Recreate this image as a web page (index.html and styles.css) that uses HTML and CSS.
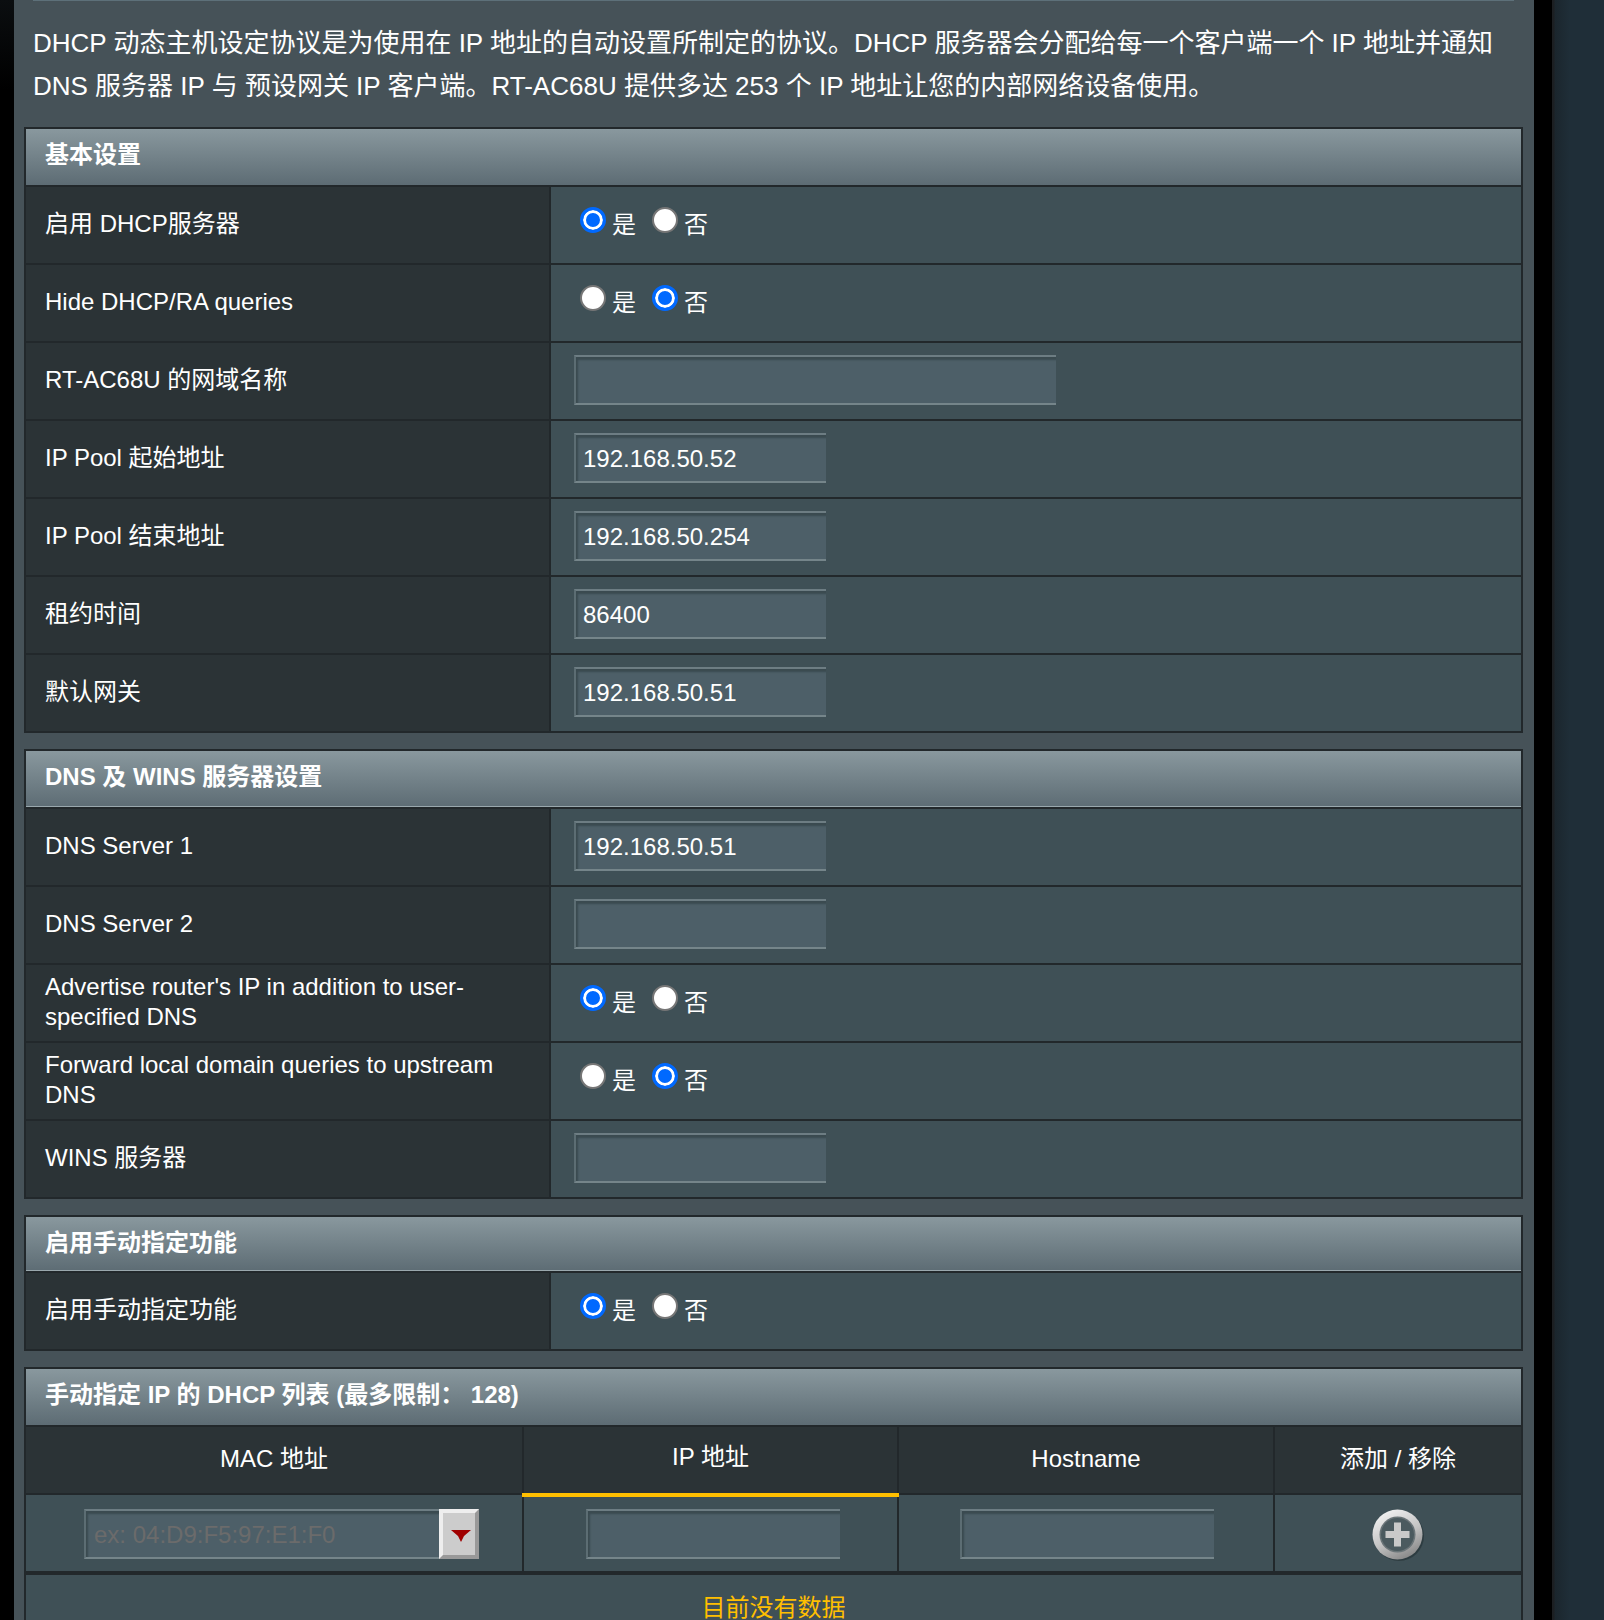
FILE: index.html

```html
<!DOCTYPE html>
<html lang="zh-CN">
<head>
    <meta charset="UTF-8">
    <meta name="viewport" content="width=device-width, initial-scale=1.0">
    <title>DHCP 服务器</title>
    <link rel="stylesheet" href="styles.css">
</head>
<body>

<div class="edge-left"></div>

<div class="panel">
  <div class="top-rule"></div>
  <p class="intro">DHCP 动态主机设定协议是为使用在 IP 地址的自动设置所制定的协议。DHCP 服务器会分配给每一个客户端一个 IP 地址并通知 DNS 服务器 IP 与 预设网关 IP 客户端。RT-AC68U 提供多达 253 个 IP 地址让您的内部网络设备使用。</p>

  <table class="form-table">
    <colgroup><col class="col-label"><col></colgroup>
    <thead>
      <tr><th colspan="2" class="section-title">基本设置</th></tr>
    </thead>
    <tbody>
      <tr>
        <td class="label">启用 DHCP服务器</td>
        <td class="value">
          <div class="radios">
            <label class="radio"><input type="radio" name="dhcp_enable" checked>是</label>
            <label class="radio"><input type="radio" name="dhcp_enable">否</label>
          </div>
        </td>
      </tr>
      <tr>
        <td class="label">Hide DHCP/RA queries</td>
        <td class="value">
          <div class="radios">
            <label class="radio"><input type="radio" name="hide_queries">是</label>
            <label class="radio"><input type="radio" name="hide_queries" checked>否</label>
          </div>
        </td>
      </tr>
      <tr>
        <td class="label">RT-AC68U 的网域名称</td>
        <td class="value"><input class="field field-wide" type="text"></td>
      </tr>
      <tr>
        <td class="label">IP Pool 起始地址</td>
        <td class="value"><input class="field" type="text" value="192.168.50.52"></td>
      </tr>
      <tr>
        <td class="label">IP Pool 结束地址</td>
        <td class="value"><input class="field" type="text" value="192.168.50.254"></td>
      </tr>
      <tr>
        <td class="label">租约时间</td>
        <td class="value"><input class="field" type="text" value="86400"></td>
      </tr>
      <tr>
        <td class="label">默认网关</td>
        <td class="value"><input class="field" type="text" value="192.168.50.51"></td>
      </tr>
    </tbody>
  </table>

  <table class="form-table">
    <colgroup><col class="col-label"><col></colgroup>
    <thead>
      <tr><th colspan="2" class="section-title lit">DNS 及 WINS 服务器设置</th></tr>
    </thead>
    <tbody>
      <tr>
        <td class="label">DNS Server 1</td>
        <td class="value"><input class="field" type="text" value="192.168.50.51"></td>
      </tr>
      <tr>
        <td class="label">DNS Server 2</td>
        <td class="value"><input class="field" type="text"></td>
      </tr>
      <tr>
        <td class="label">Advertise router's IP in addition to user-specified DNS</td>
        <td class="value">
          <div class="radios">
            <label class="radio"><input type="radio" name="advertise_ip" checked>是</label>
            <label class="radio"><input type="radio" name="advertise_ip">否</label>
          </div>
        </td>
      </tr>
      <tr>
        <td class="label">Forward local domain queries to upstream DNS</td>
        <td class="value">
          <div class="radios">
            <label class="radio"><input type="radio" name="forward_local">是</label>
            <label class="radio"><input type="radio" name="forward_local" checked>否</label>
          </div>
        </td>
      </tr>
      <tr>
        <td class="label">WINS 服务器</td>
        <td class="value"><input class="field" type="text"></td>
      </tr>
    </tbody>
  </table>

  <table class="form-table">
    <colgroup><col class="col-label"><col></colgroup>
    <thead>
      <tr><th colspan="2" class="section-title lit short">启用手动指定功能</th></tr>
    </thead>
    <tbody>
      <tr>
        <td class="label">启用手动指定功能</td>
        <td class="value">
          <div class="radios">
            <label class="radio"><input type="radio" name="static_enable" checked>是</label>
            <label class="radio"><input type="radio" name="static_enable">否</label>
          </div>
        </td>
      </tr>
    </tbody>
  </table>

  <table class="list-table">
    <colgroup>
      <col class="col-mac"><col class="col-ip"><col class="col-host"><col>
    </colgroup>
    <thead>
      <tr><th colspan="4" class="section-title">手动指定 IP 的 DHCP 列表 (最多限制： 128)</th></tr>
      <tr class="col-heads">
        <th>MAC 地址</th>
        <th class="sorted">IP 地址</th>
        <th>Hostname</th>
        <th>添加 / 移除</th>
      </tr>
    </thead>
    <tbody>
      <tr class="add-row">
        <td class="cell-mac">
          <div class="combo">
            <input class="field field-mac" type="text" placeholder="ex: 04:D9:F5:97:E1:F0">
            <button class="combo-btn" type="button" aria-label="选择">
              <svg width="20" height="12" viewBox="0 0 20 12"><polygon points="0,0 20,0 13,6 10,12 7,6" fill="#a00000"/></svg>
            </button>
          </div>
        </td>
        <td class="cell-ip"><input class="field field-list" type="text"></td>
        <td class="cell-host"><input class="field field-list" type="text"></td>
        <td class="cell-add">
          <svg class="add-icon" width="54" height="54" viewBox="0 0 54 54" role="img" aria-label="添加">
            <defs>
              <linearGradient id="ring" x1="0.2" y1="0" x2="0.7" y2="1">
                <stop offset="0" stop-color="#f4f4f4"/>
                <stop offset="0.55" stop-color="#c4c4c4"/>
                <stop offset="1" stop-color="#858585"/>
              </linearGradient>
              <filter id="soft"><feGaussianBlur stdDeviation="0.6"/></filter>
            </defs>
            <circle cx="27" cy="27" r="25" fill="#1f2a2e" opacity="0.5" filter="url(#soft)"/>
            <g filter="url(#soft)">
              <circle cx="25.500" cy="25.500" r="25" fill="url(#ring)"/>
              <circle cx="25.500" cy="25.500" r="18" fill="#6a7478"/>
              <circle cx="25.500" cy="25.500" r="16.500" fill="#4c5a5f"/>
              <path d="M22 13.500h7v8.500h8.500v7h-8.500v8.500h-7v-8.500h-8.500v-7h8.500z" fill="#c9c9c9"/>
            </g>
          </svg>
        </td>
      </tr>
    </tbody>
  </table>

  <div class="no-data">目前没有数据</div>
</div>

<div class="gap"></div>
<div class="side"></div>

</body>
</html>
```

FILE: styles.css

```css
html, body {
    margin: 0;
    height: 1620px;
    overflow: hidden;
}
body {
    display: flex;
    background: #000;
    color: #fff;
    font-family: "Liberation Sans", "Noto Sans CJK SC", sans-serif;
    font-size: 24px;
}
.edge-left {
    width: 14px;
    background: linear-gradient(#0b0e10, #000 90px);
}
.panel {
    width: 1520px;
    box-sizing: border-box;
    padding: 0 11px 0 10px;
    background: #465258;
}
.top-rule {
    height: 1px;
    margin: 0 9px;
    background: #5d7079;
}
.intro {
    margin: 21px 9px 19px;
    font-size: 26px;
    line-height: 43px;
}

/* tables */
table {
    width: 1499px;
    table-layout: fixed;
    border-collapse: separate;
    border-spacing: 0;
    border: 2px solid #22282b;
    border-bottom: 0;
}
.form-table {
    margin-bottom: 16px;
}
.col-label {
    width: 525px;
}
th, td {
    box-sizing: border-box;
    padding: 0;
    line-height: 30px;
    border-bottom: 2px solid #22282b;
}
.section-title {
    height: 58px;
    padding: 0 0 5px 19px;
    text-align: left;
    font-weight: bold;
    background: linear-gradient(#89989e, #5d6c74);
}
.section-title.lit {
    box-shadow: inset 0 -1px 0 #9aa8ad;
}
.section-title.short {
    height: 56px;
    padding-bottom: 2px;
}
.label {
    height: 78px;
    padding: 0 30px 2px 19px;
    background: #2b3336;
    border-right: 2px solid #22282b;
}
.value {
    height: 78px;
    padding: 12px 0 0 23px;
    vertical-align: top;
    background: #3f5056;
}

/* radios */
.radios {
    display: flex;
    gap: 16px;
    padding: 8px 0 0 6px;
}
.radio {
    display: flex;
    gap: 6px;
    line-height: 36px;
}
.radio input {
    appearance: none;
    box-sizing: border-box;
    width: 26px;
    height: 26px;
    margin: 0;
    background: #fff;
    border: 2px solid #767676;
    border-radius: 50%;
}
.radio input:checked {
    background: #0069ff;
    border: 3px solid #0069ff;
    box-shadow: inset 0 0 0 3px #fff;
}

/* text inputs */
.field {
    display: block;
    box-sizing: border-box;
    width: 252px;
    height: 50px;
    padding: 2px 0 0 7px;
    color: #fff;
    font: inherit;
    background: #4d5f68;
    border: 0;
    border-top: 2px solid #6d7d83;
    border-left: 2px solid #5c6d73;
    border-bottom: 2px solid #75858a;
    border-radius: 0;
    box-shadow: inset 2px 3px 2px #3a4a50;
    outline: none;
}
.field-wide {
    width: 482px;
}
.field-list {
    width: 254px;
}
.field-mac {
    width: 355px;
    padding-left: 8px;
}
.field-mac::placeholder {
    color: #6b6b6b;
    opacity: 1;
}

/* static lease list */
.list-table {
    margin-bottom: 0;
}
.col-mac {
    width: 498px;
}
.col-ip {
    width: 375px;
}
.col-host {
    width: 376px;
}
.col-heads th {
    height: 68px;
    padding-bottom: 2px;
    font-weight: normal;
    background: #2b3336;
    border-right: 2px solid #22282b;
}
.col-heads th:last-child,
.add-row td:last-child {
    border-right: 0;
}
.col-heads .sorted {
    position: relative;
    padding-bottom: 6px;
}
.col-heads .sorted::after {
    content: "";
    position: absolute;
    left: -2px;
    right: -2px;
    bottom: -4px;
    height: 4px;
    background: #ffbf00;
}
.add-row td {
    height: 78px;
    padding-top: 14px;
    vertical-align: top;
    background: #3f5056;
    border-right: 2px solid #22282b;
}
.add-row .cell-mac {
    padding-left: 58px;
}
.add-row .cell-ip {
    padding-left: 62px;
}
.add-row .cell-host {
    padding-left: 61px;
}
.add-row .cell-add {
    padding-left: 97px;
}
.combo {
    display: flex;
}
.combo-btn {
    display: flex;
    align-items: center;
    justify-content: center;
    box-sizing: border-box;
    width: 40px;
    height: 50px;
    padding: 4px 0 0 4px;
    background: #ccc;
    border: 4px solid;
    border-color: #eee #999 #999 #eee;
}
.add-icon {
    display: block;
}
.no-data {
    height: 66px;
    line-height: 66px;
    text-align: center;
    color: #ffbf00;
    background: #3f5056;
    border: 2px solid #22282b;
    border-bottom: 0;
    width: 1495px;
}

.gap {
    width: 18px;
}
.side {
    flex: 1;
    background: linear-gradient(90deg, #1c1f22 2px, #1b262d 3px, #1f2e38 18px);
}
```
